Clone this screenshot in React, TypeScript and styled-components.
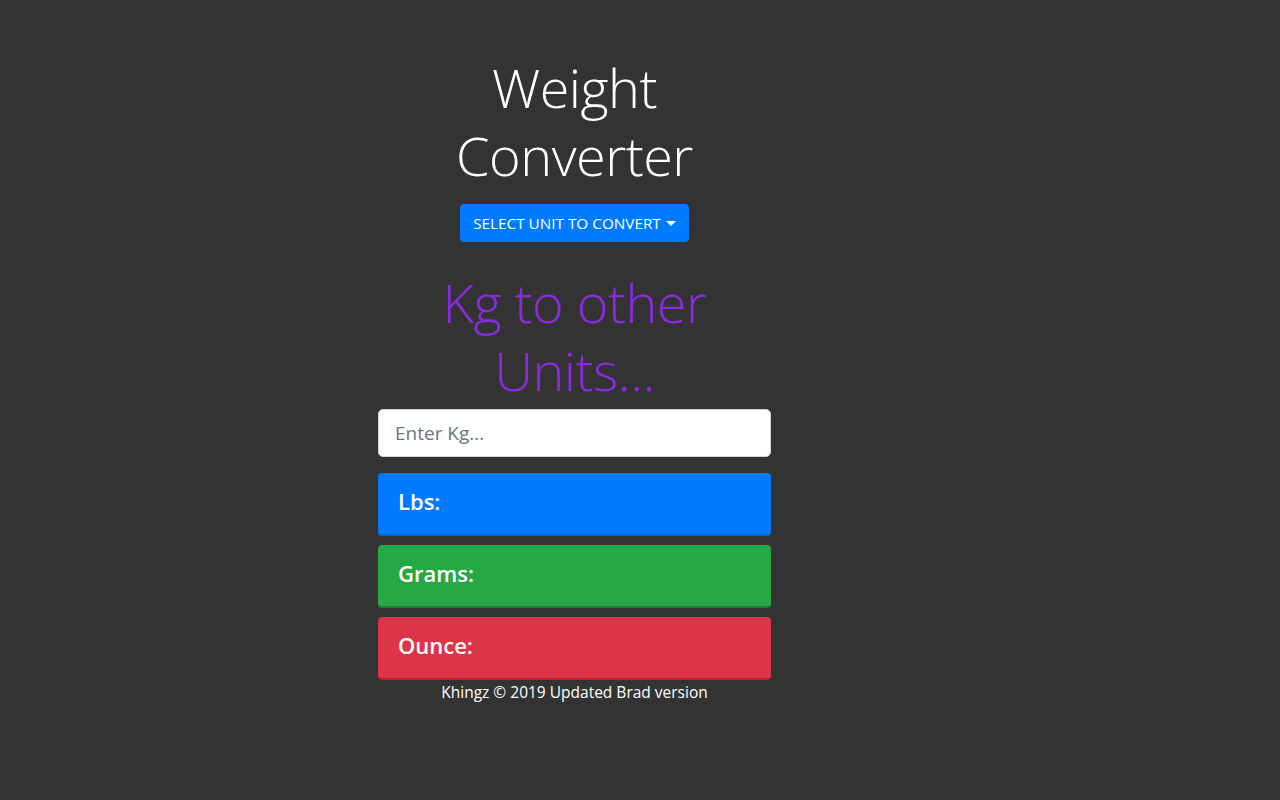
import React from "react";
import styled, { createGlobalStyle } from "styled-components";

const Global = createGlobalStyle`
  html, body { margin: 0; padding: 0; background: #333333; }
  body {
    font-family: "Open Sans", "Noto Sans", "Liberation Sans", sans-serif;
    color: #ffffff;
    font-size: 16px;
    line-height: 1.5;
  }
  * { box-sizing: border-box; }
`;

const Page = styled.div`
  min-height: 800px;
  display: flex;
  padding-left: 378px;
  padding-top: 53px;
`;

const Column = styled.div`
  width: 393px;
  display: flex;
  flex-direction: column;
  align-items: stretch;
`;

const Display = styled.h1<{ $color?: string }>`
  margin: 0;
  align-self: center;
  max-width: 340px;
  font-family: "Open Sans", "Noto Sans", sans-serif;
  font-weight: 300;
  font-size: 54px;
  line-height: 68px;
  text-align: center;
  color: ${(p) => p.$color || "#ffffff"};
  letter-spacing: -0.5px;
`;

const ButtonRow = styled.div`
  display: flex;
  justify-content: center;
  margin-top: 15px;
  margin-bottom: 26px;
`;

const DropButton = styled.button`
  display: inline-flex;
  align-items: center;
  gap: 5px;
  height: 38px;
  justify-content: center;
  padding: 0 12px;
  background: #007bff;
  border: 1px solid #007bff;
  border-radius: 4px;
  color: #ffffff;
  font-family: "Open Sans", "Noto Sans", sans-serif;
  font-size: 15.3px;
  text-transform: uppercase;
  cursor: pointer;
`;

const Caret = styled.span`
  display: inline-block;
  width: 0;
  height: 0;
  border-top: 5px solid #ffffff;
  border-left: 5px solid transparent;
  border-right: 5px solid transparent;
  margin-top: 1px;
`;

const Input = styled.input`
  margin-top: 5px;
  height: 48px;
  width: 100%;
  padding: 0 16px;
  font-family: "Open Sans", "Noto Sans", sans-serif;
  font-size: 19px;
  color: #495057;
  background: #ffffff;
  border: 1px solid #ced4da;
  border-radius: 5px;
  outline: none;
  &::placeholder { color: #6c757d; }
`;

const Cards = styled.div`
  margin-top: 16px;
  display: flex;
  flex-direction: column;
  gap: 9px;
`;

const Card = styled.div<{ $bg: string; $edge: string }>`
  height: 63px;
  display: flex;
  align-items: center;
  padding: 0 20px 4px;
  background: ${(p) => p.$bg};
  border-radius: 4px;
  border-bottom: 2px solid ${(p) => p.$edge};
`;

const CardTitle = styled.h4`
  margin: 0;
  font-family: "Open Sans", "Noto Sans", sans-serif;
  font-weight: 600;
  font-size: 22px;
  line-height: 1.2;
  color: #ffffff;
`;

const Footer = styled.p`
  margin: 0;
  text-align: center;
  font-size: 15.5px;
  line-height: 24px;
  color: #ffffff;
`;

export default function App() {
  return (
    <>
      <Global />
      <Page>
        <Column>
          <Display>Weight Converter</Display>
          <ButtonRow>
            <DropButton>
              Select Unit to Convert <Caret />
            </DropButton>
          </ButtonRow>
          <Display $color="#8a2be2">Kg to other Units...</Display>
          <Input placeholder="Enter Kg..." />
          <Cards>
            <Card $bg="#007bff" $edge="#0069d9">
              <CardTitle>Lbs:</CardTitle>
            </Card>
            <Card $bg="#28a745" $edge="#1e7e34">
              <CardTitle>Grams:</CardTitle>
            </Card>
            <Card $bg="#dc3545" $edge="#bd2130">
              <CardTitle>Ounce:</CardTitle>
            </Card>
          </Cards>
          <Footer>Khingz © 2019 Updated Brad version</Footer>
        </Column>
      </Page>
    </>
  );
}
